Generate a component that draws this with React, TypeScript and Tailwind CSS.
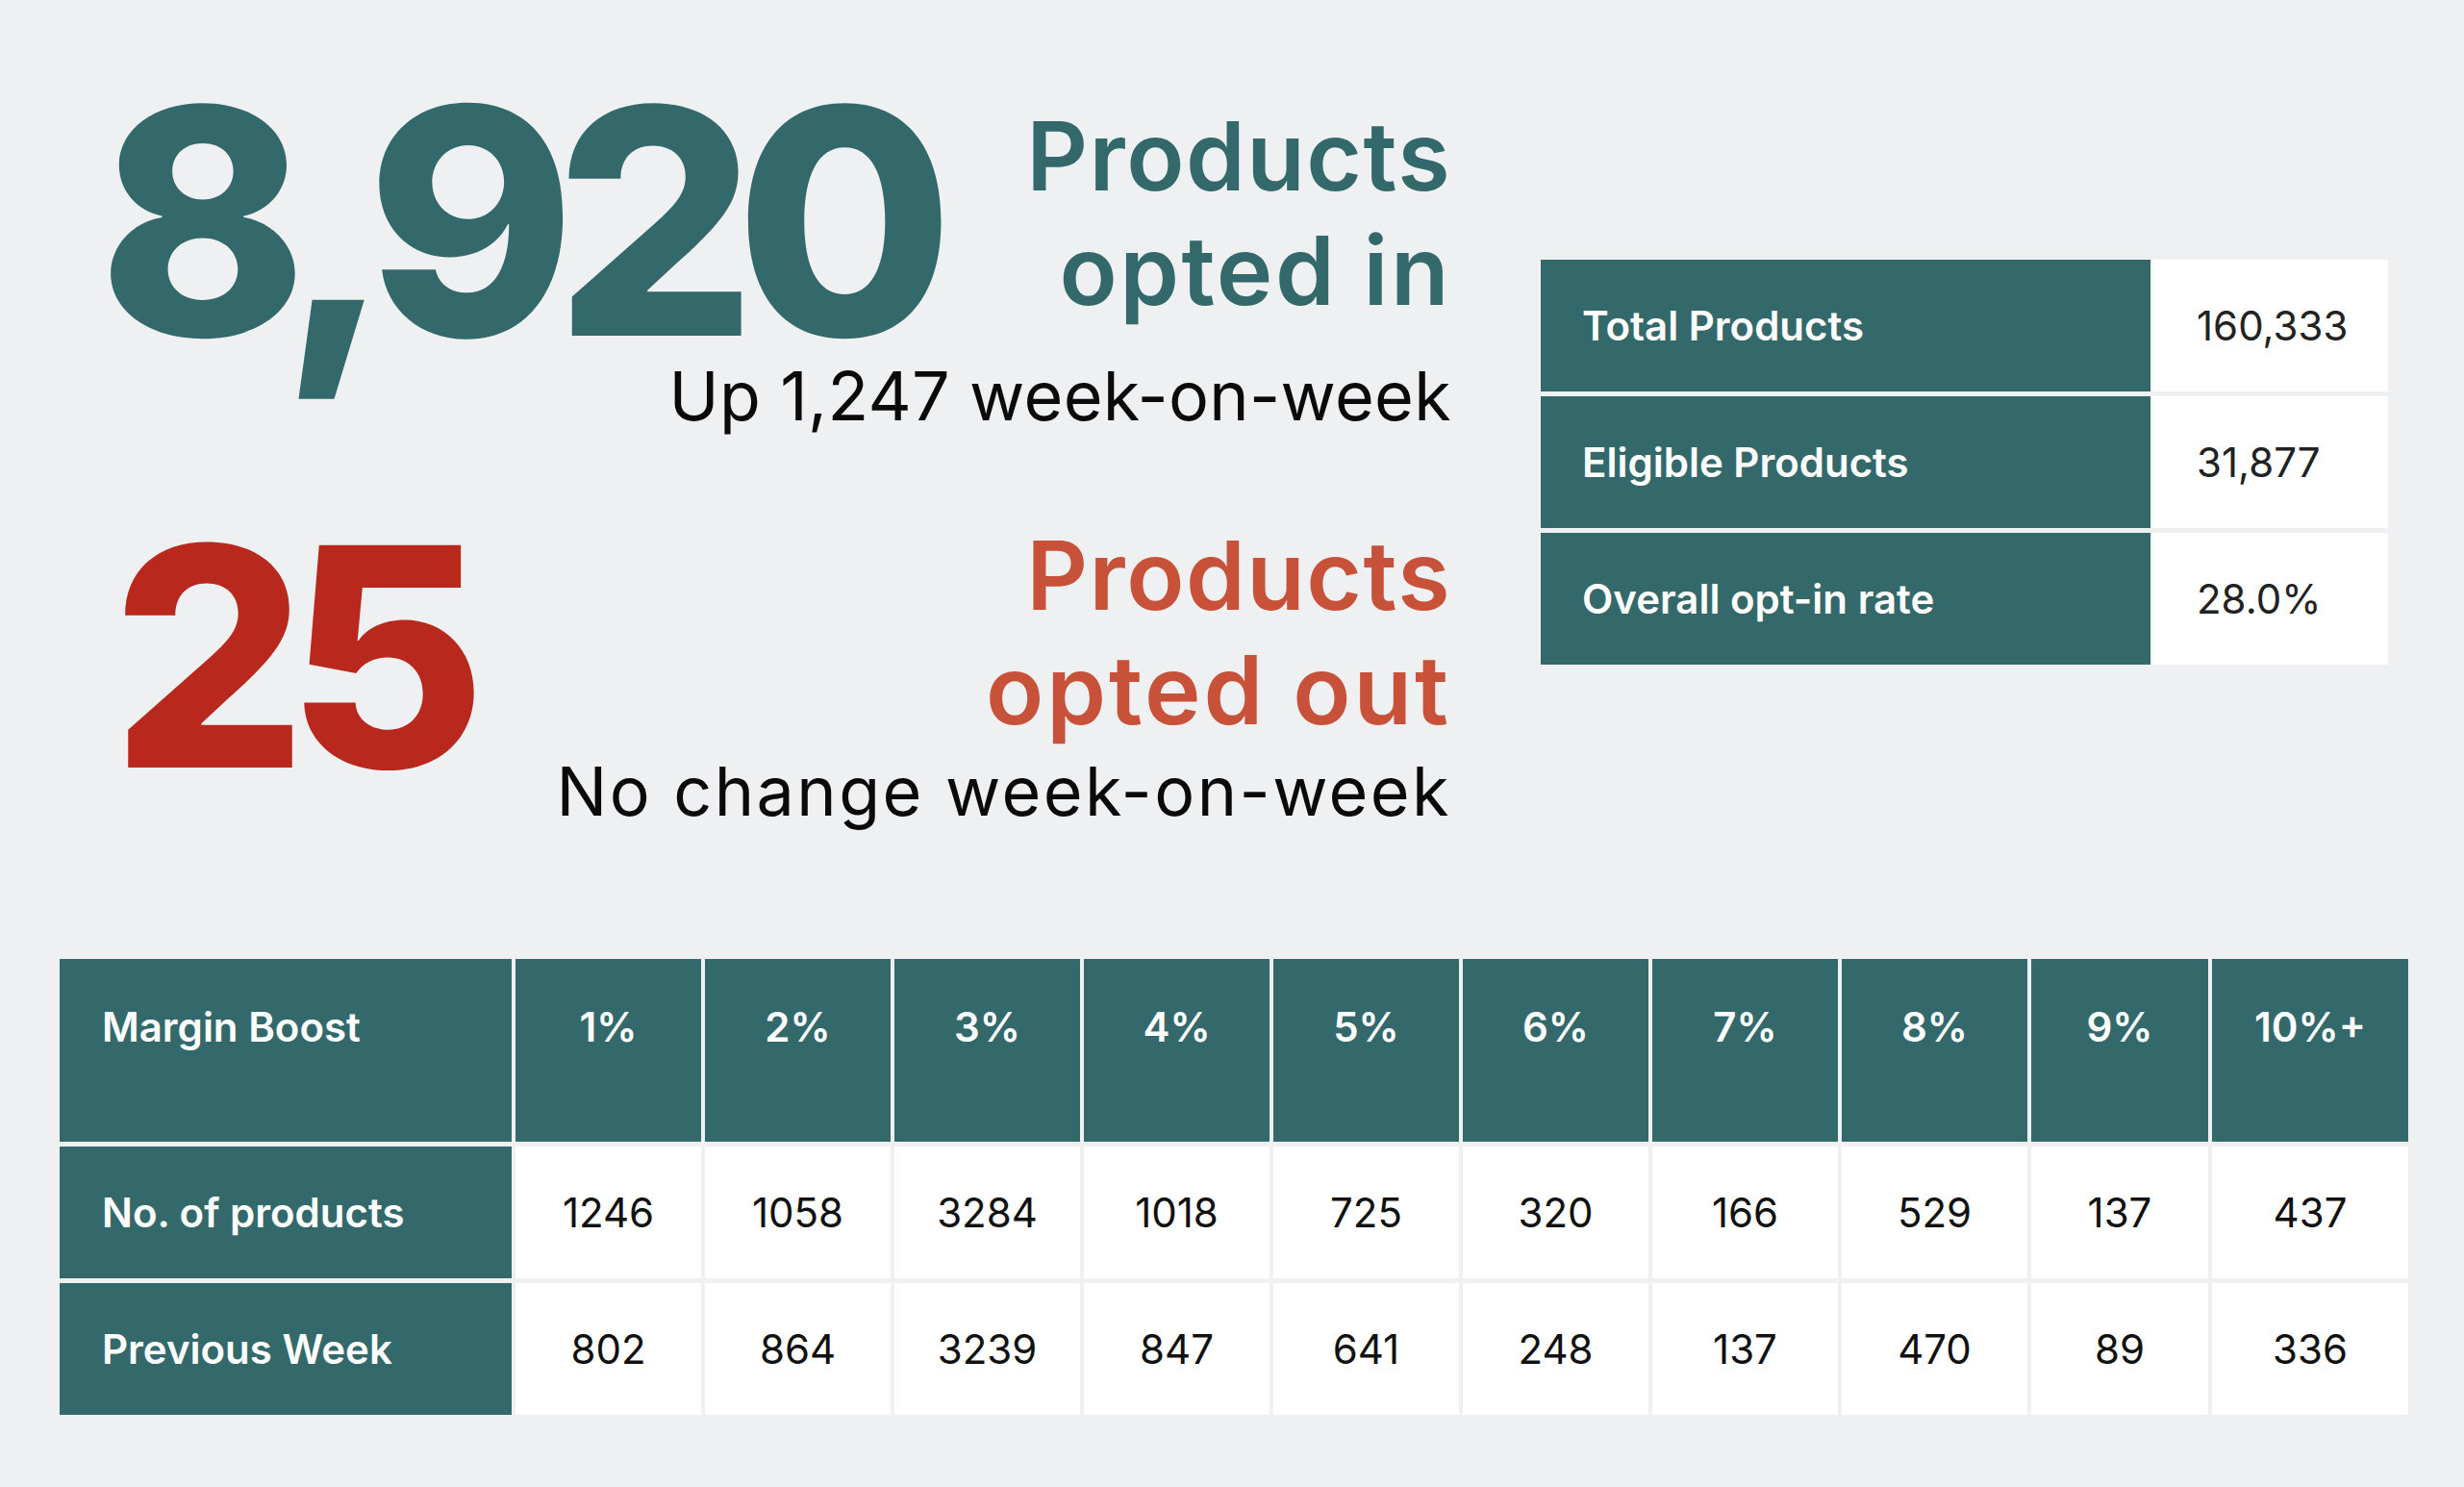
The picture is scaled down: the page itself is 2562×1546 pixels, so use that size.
import React from "react";

const TEAL = "bg-[#33696b]";

function RightTable() {
  const rows = [
    ["Total Products", "160,333"],
    ["Eligible Products", "31,877"],
    ["Overall opt-in rate", "28.0%"],
  ];
  return (
    <div className="ml-[93px] mt-[170px] flex w-[881px] shrink-0 flex-col gap-[5px]">
      {rows.map(([k, v]) => (
        <div key={k} className="flex h-[137px] gap-[2px]">
          <div className={`${TEAL} flex w-[634px] items-center pl-[43px] text-[42px] font-semibold text-white`}>
            {k}
          </div>
          <div className="flex flex-1 items-center bg-white pl-[46px] text-[42px] text-[#222222]">{v}</div>
        </div>
      ))}
    </div>
  );
}

function BottomTable() {
  const heads = ["1%", "2%", "3%", "4%", "5%", "6%", "7%", "8%", "9%", "10%+"];
  const now = ["1246", "1058", "3284", "1018", "725", "320", "166", "529", "137", "437"];
  const prev = ["802", "864", "3239", "847", "641", "248", "137", "470", "89", "336"];
  const row = (label: string, vals: string[]) => (
    <React.Fragment key={label}>
      <div className={`${TEAL} flex items-center pl-[44px] text-[42px] font-semibold text-white`}>{label}</div>
      {vals.map((v, i) => (
        <div key={i} className="flex items-center justify-center bg-white text-[42px] text-[#111111]">
          {v}
        </div>
      ))}
    </React.Fragment>
  );
  return (
    <div className="ml-[62px] grid w-[2442px] grid-cols-[470px_repeat(8,193px)_184px_204px] grid-rows-[190px_137px_137px] gap-x-[4px] gap-y-[5px]">
      <div className={`${TEAL} pl-[44px] pt-[41px] text-[42px] leading-[60px] font-semibold text-white`}>Margin Boost</div>
      {heads.map((h) => (
        <div key={h} className={`${TEAL} pt-[41px] text-center text-[42px] leading-[60px] font-semibold text-white`}>
          {h}
        </div>
      ))}
      {row("No. of products", now)}
      {row("Previous Week", prev)}
    </div>
  );
}

export default function App() {
  return (
    <div className="flex h-[1546px] w-[2562px] flex-col overflow-hidden bg-[#eff0f2] [font-family:Inter,sans-serif]">
      <div className="flex h-[997px] shrink-0 items-start pt-[100px]">
        <div className="ml-[102px] flex w-[1407px] shrink-0 flex-col">
          <div className="flex flex-col items-end">
            <div className="flex w-full items-start justify-between">
              <div className="shrink-0 whitespace-nowrap text-[328px] leading-[260px] font-extrabold tracking-[-0.065em] text-[#33696b]">
                8,920
              </div>
              <div className="mt-[3px] flex shrink-0 flex-col items-end whitespace-nowrap">
                <div className="text-[99px] leading-[119px] font-semibold tracking-[0.015em] text-[#33696b]">Products</div>
                <div className="text-[99px] leading-[119px] font-semibold tracking-[0.025em] text-[#33696b]">opted in</div>
              </div>
            </div>
            <div className="mt-[12px] whitespace-nowrap text-[70px] leading-[80px] tracking-[0.005em] text-[#0a0a0a]">
              Up 1,247 week-on-week
            </div>
          </div>
          <div className="mt-[87px] flex items-start justify-between">
            <div className="ml-[14px] mt-[14px] shrink-0 whitespace-nowrap text-[318px] leading-[260px] font-extrabold tracking-[-0.065em] text-[#b9281d]">
              25
            </div>
            <div className="flex shrink-0 flex-col items-end whitespace-nowrap">
              <div className="text-[99px] leading-[119px] font-semibold tracking-[0.015em] text-[#c8513a]">Products</div>
              <div className="text-[99px] leading-[119px] font-semibold tracking-[0.03em] text-[#c8513a]">opted out</div>
              <div className="mt-[6px] text-[70px] leading-[80px] tracking-[0.035em] text-[#0a0a0a]">No change week-on-week</div>
            </div>
          </div>
        </div>
        <RightTable />
      </div>
      <BottomTable />
    </div>
  );
}
